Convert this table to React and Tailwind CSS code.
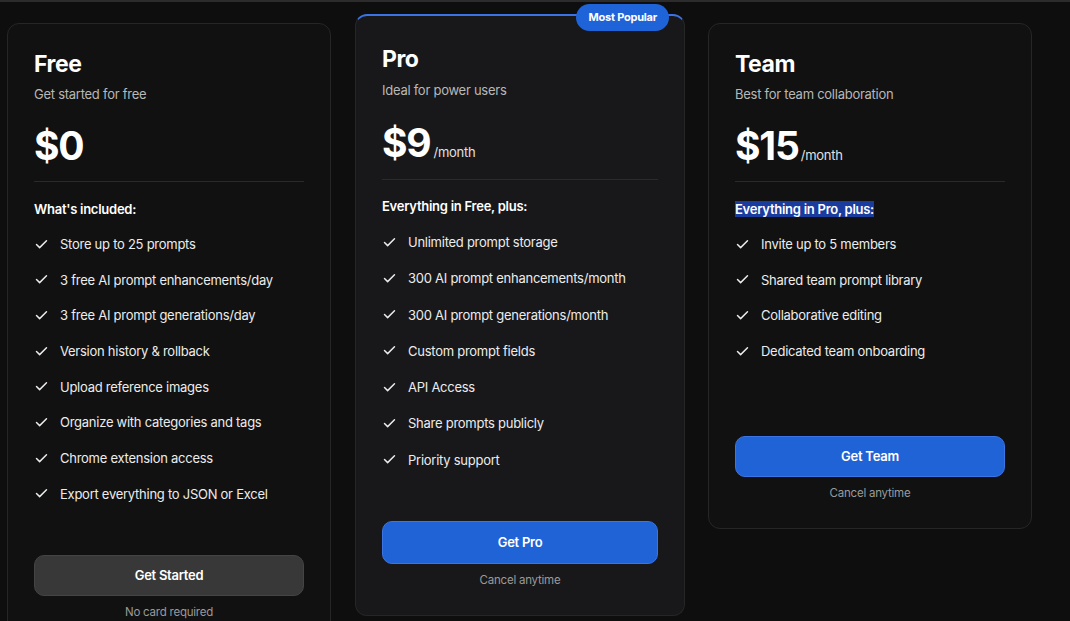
import { Check } from "lucide-react";

const font = { fontFamily: "Inter, 'Noto Sans', sans-serif" };

const Feature = ({ children }) => (
    <li className="flex items-center gap-[11px] text-[13px] leading-5 tracking-[-0.02em] text-[#ececec]">
        <Check className="w-[15px] h-[15px] shrink-0 text-[#ececec]" strokeWidth={2.3} />
        <span>{children}</span>
    </li>
);

const App = () => {
    return (
        <div className="min-h-screen w-full bg-[#0e0e0e] overflow-hidden" style={font}>
            <div className="h-[2px] w-full bg-[#2c2c2c]" />
            <div className="flex items-start pl-[7px]">
                {/* Free */}
                <div className="mt-[21px] w-[324px] shrink-0 rounded-xl border border-[#262626] bg-[#111111] px-[26px] pt-[24px] pb-[27px]">
                    <h2 className="text-[23px] leading-8 font-bold tracking-[-0.02em] text-white">Free</h2>
                    <p className="mt-1 text-[13px] leading-5 tracking-[-0.02em] text-[#b8b8b8]">Get started for free</p>
                    <div className="mt-[22px] pb-[15px] border-b border-[#2a2a2a] flex items-baseline">
                        <span className="text-[39px] leading-10 font-bold text-white tracking-[-0.03em]">$0</span>
                    </div>
                    <h3 className="mt-[17px] text-[13px] leading-5 tracking-[-0.02em] font-semibold text-white">What's included:</h3>
                    <ul className="mt-[15px] flex flex-col gap-[15.7px]">
                        <Feature>Store up to 25 prompts</Feature>
                        <Feature>3 free AI prompt enhancements/day</Feature>
                        <Feature>3 free AI prompt generations/day</Feature>
                        <Feature>Version history &amp; rollback</Feature>
                        <Feature>Upload reference images</Feature>
                        <Feature>Organize with categories and tags</Feature>
                        <Feature>Chrome extension access</Feature>
                        <Feature>Export everything to JSON or Excel</Feature>
                    </ul>
                    <button className="mt-[51px] w-full h-[41px] rounded-[10px] border border-[#444] bg-[#383838] text-[13px] tracking-[-0.02em] font-semibold text-white">
                        Get Started
                    </button>
                    <p className="mt-2 text-[11.5px] leading-4 tracking-[-0.02em] text-center text-[#9a9a9a]">No card required</p>
                </div>

                {/* Pro */}
                <div className="relative ml-6 mt-[12px] w-[330px] shrink-0 rounded-xl border border-[#262626] border-t-2 border-t-[#3b72e6] bg-[#18181b] px-[26px] pt-[27px] pb-[27px]">
                    <span className="absolute -top-[12px] right-[15px] h-[27px] px-[12px] flex items-center rounded-full bg-[#1f63d8] text-[11px] font-bold tracking-[-0.02em] text-white">
                        Most Popular
                    </span>
                    <h2 className="text-[23px] leading-8 font-bold tracking-[-0.02em] text-white">Pro</h2>
                    <p className="mt-[5px] text-[13px] leading-5 tracking-[-0.02em] text-[#b8b8b8]">Ideal for power users</p>
                    <div className="mt-[23px] pb-4 border-b border-[#2a2a2a] flex items-baseline">
                        <span className="text-[39px] leading-10 font-bold text-white tracking-[-0.03em]">$9</span>
                        <span className="ml-[3px] text-[13px] tracking-[-0.02em] text-[#e0e0e0]">/month</span>
                    </div>
                    <h3 className="mt-[16px] text-[13px] leading-5 tracking-[-0.02em] font-semibold text-white">Everything in Free, plus:</h3>
                    <ul className="mt-4 flex flex-col gap-[16.3px]">
                        <Feature>Unlimited prompt storage</Feature>
                        <Feature>300 AI prompt enhancements/month</Feature>
                        <Feature>300 AI prompt generations/month</Feature>
                        <Feature>Custom prompt fields</Feature>
                        <Feature>API Access</Feature>
                        <Feature>Share prompts publicly</Feature>
                        <Feature>Priority support</Feature>
                    </ul>
                    <button className="mt-[51px] w-full h-[43px] rounded-[10px] border border-[#3b74e4] bg-[#1f63d6] text-[13px] tracking-[-0.02em] font-semibold text-white">
                        Get Pro
                    </button>
                    <p className="mt-2 text-[11.5px] leading-4 tracking-[-0.02em] text-center text-[#9a9a9a]">Cancel anytime</p>
                </div>

                {/* Team */}
                <div className="ml-[23px] mt-[21px] w-[324px] shrink-0 rounded-xl border border-[#262626] bg-[#111111] px-[26px] pt-[24px] pb-[27px]">
                    <h2 className="text-[23px] leading-8 font-bold tracking-[-0.02em] text-white">Team</h2>
                    <p className="mt-1 text-[13px] leading-5 tracking-[-0.02em] text-[#b8b8b8]">Best for team collaboration</p>
                    <div className="mt-[22px] pb-[15px] border-b border-[#2a2a2a] flex items-baseline">
                        <span className="text-[39px] leading-10 font-bold text-white tracking-[-0.03em]">$15</span>
                        <span className="ml-[2px] text-[13px] tracking-[-0.02em] text-[#e0e0e0]">/month</span>
                    </div>
                    <h3 className="mt-[17px] text-[13px] leading-5 tracking-[-0.02em] font-semibold text-white">
                        <span className="bg-[#1a3c9e]">Everything in Pro, plus:</span>
                    </h3>
                    <ul className="mt-[15px] flex flex-col gap-[15.7px]">
                        <Feature>Invite up to 5 members</Feature>
                        <Feature>Shared team prompt library</Feature>
                        <Feature>Collaborative editing</Feature>
                        <Feature>Dedicated team onboarding</Feature>
                    </ul>
                    <button className="mt-[75px] w-full h-[41px] rounded-[10px] border border-[#3b74e4] bg-[#1f63d6] text-[13px] tracking-[-0.02em] font-semibold text-white">
                        Get Team
                    </button>
                    <p className="mt-2 text-[11.5px] leading-4 tracking-[-0.02em] text-center text-[#9a9a9a]">Cancel anytime</p>
                </div>
            </div>
        </div>
    );
};

export default App;
